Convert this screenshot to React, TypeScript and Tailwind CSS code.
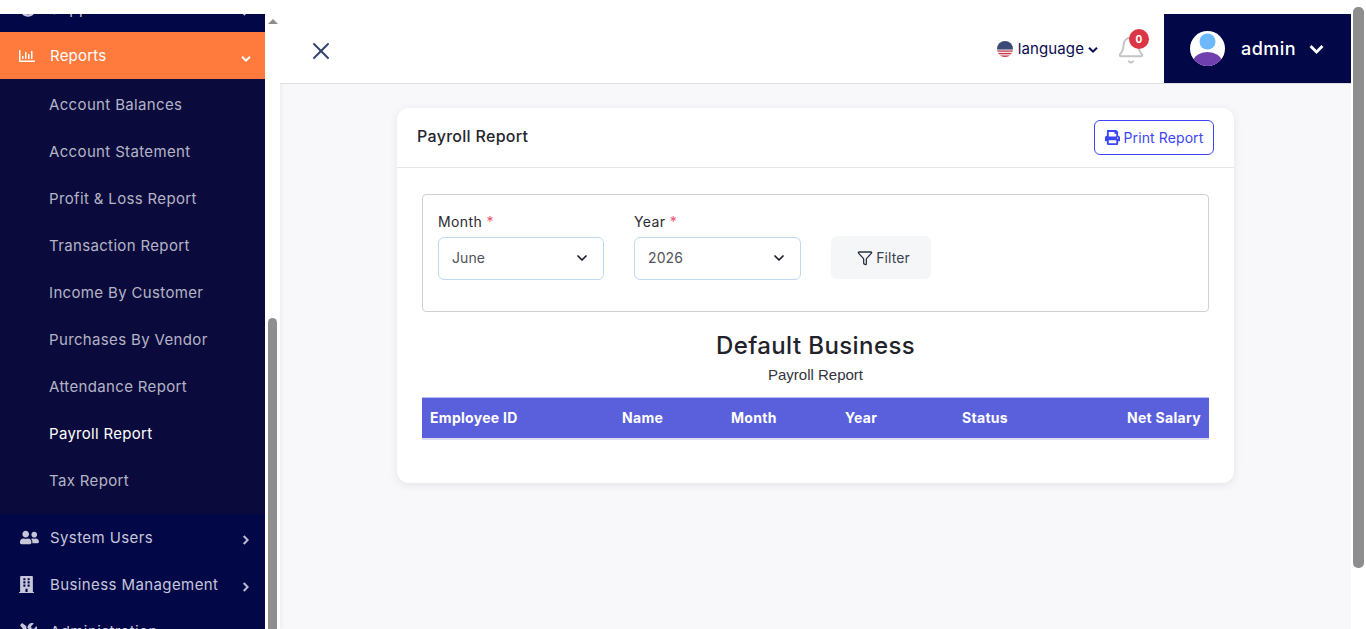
import { Bell, ChevronDown, Funnel, X } from "lucide-react";
import {
  FaBuilding,
  FaChevronDown,
  FaChevronRight,
  FaPrint,
  FaRegChartBar,
  FaTools,
  FaUserFriends,
  FaQuestionCircle,
} from "react-icons/fa";

const subItems = [
  "Account Balances",
  "Account Statement",
  "Profit & Loss Report",
  "Transaction Report",
  "Income By Customer",
  "Purchases By Vendor",
  "Attendance Report",
  "Payroll Report",
  "Tax Report",
];

const NavRow = ({ icon, label }: { icon: React.ReactNode; label: string }) => (
  <div className="flex h-[47px] shrink-0 items-center pl-5 pr-[14px] text-[#c6c6d8]">
    <span className="w-[30px] text-[19px]">{icon}</span>
    <span className="pt-[1px] text-[15px] tracking-[0.4px]">{label}</span>
    <FaChevronRight className="ml-auto mt-1 stroke-[25px] text-[10px]" />
  </div>
);

const Flag = () => (
  <svg width="16" height="16" viewBox="0 0 16 16">
    <defs>
      <clipPath id="flag">
        <circle cx="8" cy="8" r="8" />
      </clipPath>
    </defs>
    <g clipPath="url(#flag)">
      <rect width="16" height="16" fill="#f2e6e6" />
      <rect y="9.5" width="16" height="1.2" fill="#c8374a" />
      <rect y="12" width="16" height="1.2" fill="#c8374a" />
      <rect y="14.5" width="16" height="1.5" fill="#c8374a" />
      <rect width="16" height="8.5" fill="#3c4a78" />
    </g>
  </svg>
);

const Avatar = () => (
  <svg width="35" height="35" viewBox="0 0 35 35">
    <defs>
      <clipPath id="avatar">
        <circle cx="17.5" cy="17.5" r="17.5" />
      </clipPath>
    </defs>
    <g clipPath="url(#avatar)">
      <rect width="35" height="35" fill="#fff" />
      <circle cx="17.5" cy="10.5" r="8" fill="#6db8fb" />
      <ellipse cx="17.5" cy="30" rx="14" ry="9" fill="#6f3fb0" />
    </g>
  </svg>
);

const Select = ({ label, value, width }: { label: string; value: string; width: string }) => (
  <div className={width}>
    <label className="mb-[5px] block h-[21px] text-[14px] leading-[21px] tracking-[0.4px] text-[#2a2a33]">
      {label} <span className="text-[#f0506e]">*</span>
    </label>
    <div className="flex h-[43px] items-center justify-between rounded-md border border-[#bfd9f2] bg-white pb-[2px] pl-[13px] pr-[13px] text-[14px] text-[#50525c]">
      {value}
      <ChevronDown size={16} strokeWidth={2.6} className="text-[#1a1a2a]" />
    </div>
  </div>
);

export default function App() {
  return (
    <div className="flex h-[629px] overflow-hidden bg-[#f8f7fa] font-['Inter','Noto_Sans',sans-serif] tracking-[0.1px]">
      {/* sidebar */}
      <aside className="flex w-[280px] shrink-0 flex-col bg-white pt-[14px] shadow-[0_0_6px_rgba(0,0,0,0.08)]">
        <div className="flex min-h-0 flex-1">
          <nav className="flex w-[265px] flex-col overflow-hidden bg-[#020748]">
            <div className="-mt-[29px]">
              <NavRow icon={<FaQuestionCircle className="text-[16px]" />} label="Support Tickets" />
            </div>
            <div className="flex h-[47px] shrink-0 items-center bg-[#ff7a3d] pl-5 pr-[14px] pt-[2px] text-white">
              <span className="-ml-[1px] -mt-[2px] w-[31px] text-[16px]">
                <FaRegChartBar />
              </span>
              <span className="text-[15px] tracking-[0.2px]">Reports</span>
              <FaChevronDown className="ml-auto mt-1 stroke-[25px] text-[10px]" />
            </div>
            <div className="shrink-0 bg-[#0a0a3c] pb-[9px] pt-[3px]">
              {subItems.map((item) => (
                <div
                  key={item}
                  className={
                    item === "Payroll Report"
                      ? "flex h-[47px] items-center pl-[49px] text-[15px] tracking-[0.3px] text-white"
                      : "flex h-[47px] items-center pl-[49px] text-[15px] tracking-[0.35px] text-[#b4b4c6]"
                  }
                >
                  {item}
                </div>
              ))}
            </div>
            <NavRow icon={<FaUserFriends />} label="System Users" />
            <NavRow icon={<FaBuilding className="-ml-[2px] text-[17px]" />} label="Business Management" />
            <NavRow icon={<FaTools className="text-[17px]" />} label="Administration" />
          </nav>
          {/* sidebar scrollbar */}
          <div className="flex w-[15px] flex-col items-center pt-[5px]">
            <div className="h-0 w-0 border-x-[5px] border-b-[5px] border-x-transparent border-b-[#8e8e8e]" />
            <div className="mt-[294px] w-[9px] flex-1 rounded-t-[5px] bg-[#8e8e8e]" />
          </div>
        </div>
      </aside>

      {/* page */}
      <div className="flex min-w-0 flex-1 flex-col">
        <header className="flex h-[84px] shrink-0 items-stretch border-b border-[#dedee3] bg-white pt-[14px]">
          <div className="flex items-center pl-[27px] pt-[5px] text-[#34466f]">
            <X size={28} strokeWidth={1.7} />
          </div>
          <div className="ml-auto flex items-center pr-[18px] pt-[1px]">
            <Flag />
            <span className="ml-[5px] text-[15px] text-[#0a0a50]">language</span>
            <FaChevronDown className="ml-[4px] mt-[2px] stroke-[25px] text-[10px] text-[#0a0a50]" />
            <div className="relative ml-[18px] mt-[2px] text-[#c4c4c4]">
              <Bell size={30} strokeWidth={1.5} />
              <span className="absolute -right-[3px] -top-[6px] flex h-5 w-5 items-center justify-center rounded-full bg-[#dc3545] text-[10px] font-bold text-white">
                0
              </span>
            </div>
          </div>
          <div className="flex w-[187px] items-center bg-[#020748] pl-[26px] text-white">
            <Avatar />
            <span className="ml-[16px] text-[18px] font-medium tracking-[0.5px]">admin</span>
            <FaChevronDown className="ml-[13px] mt-[1px] stroke-[25px] text-[15px]" />
          </div>
        </header>

        <main className="min-h-0 flex-1 pt-6">
          <section className="mx-auto h-[375px] w-[837px] rounded-xl bg-white shadow-[0_2px_8px_rgba(60,60,90,0.1)]">
            <div className="flex h-[60px] items-center justify-between border-b border-[#e6e6ea] pl-5 pr-5">
              <h2 className="pb-[3px] text-[16px] font-medium tracking-[0.3px] text-[#25252f]">Payroll Report</h2>
              <button className="flex h-[35px] w-[120px] items-center justify-center gap-1 rounded-md border border-[#3d46f5] text-[14px] text-[#3d46f5]">
                <FaPrint className="text-[15px]" />
                Print Report
              </button>
            </div>
            <div className="px-[25px] pt-[26px]">
              <div className="flex h-[118px] items-start gap-[30px] rounded border border-[#cfcfd4] pl-[15px] pt-[16px]">
                <Select label="Month" value="June" width="w-[166px]" />
                <Select label="Year" value="2026" width="w-[167px]" />
                <button className="mt-[25px] flex h-[43px] w-[100px] items-center justify-center gap-[3px] rounded-md bg-[#f5f6f8] pl-[5px] text-[14px] text-[#3c4250]">
                  <Funnel size={16} strokeWidth={1.9} className="text-[#2a3040]" />
                  Filter
                </button>
              </div>
              <h1 className="mt-[16px] text-center text-[24px] font-medium leading-[36px] tracking-[0.4px] text-[#22222a]">
                Default Business
              </h1>
              <p className="text-center font-['Liberation_Sans',sans-serif] text-[15px] leading-[21px] tracking-normal text-[#33333b]">
                Payroll Report
              </p>
              <table className="mt-[12px] w-[787px] table-fixed border-t border-b-2 border-t-[#b9bbee] border-b-[#dcdcf3] bg-[#5a5fdc] text-[14px] font-extrabold tracking-[0.3px] text-white">
                <thead>
                  <tr className="h-[41px]">
                    <th className="w-[192px] pl-2 text-left">Employee ID</th>
                    <th className="w-[109px] pl-2 text-left">Name</th>
                    <th className="w-[114px] pl-2 text-left">Month</th>
                    <th className="w-[117px] pl-2 text-left">Year</th>
                    <th className="w-[130px] pl-2 text-left">Status</th>
                    <th className="pr-2 text-right">Net Salary</th>
                  </tr>
                </thead>
              </table>
            </div>
          </section>
        </main>
      </div>

      {/* page scrollbar */}
      <div className="flex w-[15px] shrink-0 bg-white px-[2px] pb-[61px] pt-[7px]">
        <div className="flex-1 rounded-[5px] bg-[#8e8e8e]" />
      </div>
    </div>
  );
}
